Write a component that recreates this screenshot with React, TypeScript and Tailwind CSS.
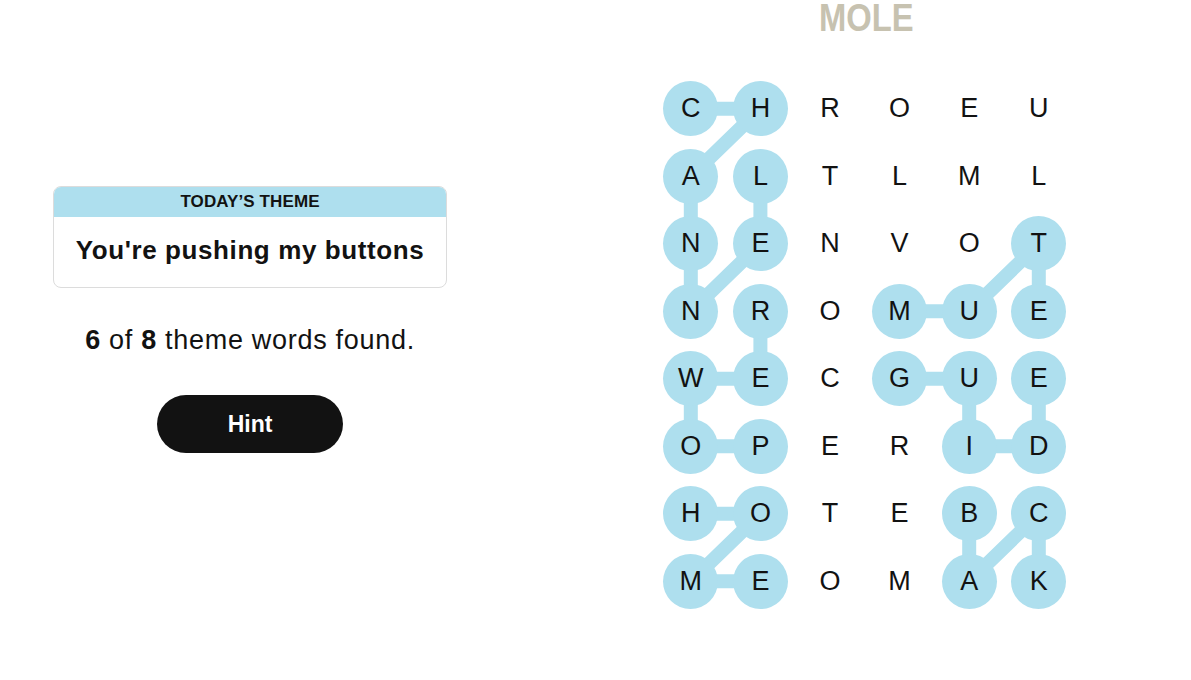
import React from "react";

const ROWS = ["CHROEU", "ALTLML", "NENVOT", "NROMUE", "WECGUE", "OPERID", "HOTEBC", "MEOMAK"];

const WORDS: [number, number][][] = [
  [[0, 0], [0, 1], [1, 0], [2, 0], [3, 0], [2, 1], [1, 1]],
  [[5, 1], [5, 0], [4, 0], [4, 1], [3, 1]],
  [[6, 0], [6, 1], [7, 0], [7, 1]],
  [[3, 3], [3, 4], [2, 5], [3, 5]],
  [[4, 3], [4, 4], [5, 4], [5, 5], [4, 5]],
  [[6, 4], [7, 4], [6, 5], [7, 5]],
];

const CW = 69.6;
const CH = 67.5;

const lit = new Set<string>();
WORDS.forEach((w) => w.forEach(([r, c]) => lit.add(`${r}-${c}`)));

const cx = (c: number) => c * CW + CW / 2;
const cy = (r: number) => r * CH + CH / 2;

export default function App() {
  return (
    <div
      className="flex w-[1191px] h-[680px] bg-white text-[#121212] overflow-hidden"
      style={{ fontFamily: '"Liberation Sans", Arial, sans-serif' }}
    >
      <div className="ml-[53px] w-[394px] pt-[186px] flex flex-col items-center">
        <div className="w-full rounded-[8px] border border-[#dcdcdc] overflow-hidden">
          <div className="h-[30px] bg-[#aedfee] flex items-center justify-center text-[17px] font-bold tracking-[0.1px] uppercase">
            TODAY’S THEME
          </div>
          <div className="h-[70px] pb-[4px] flex items-center justify-center text-[26px] font-bold tracking-[0.6px]">
            You're pushing my buttons
          </div>
        </div>
        <div className="mt-[36px] text-[27px] tracking-[0.7px] leading-[32px]">
          <span className="font-bold">6</span> of <span className="font-bold">8</span> theme words found.
        </div>
        <button className="mt-[39px] w-[186px] h-[58px] rounded-full bg-[#121212] text-white text-[23px] font-bold flex items-center justify-center">
          Hint
        </button>
      </div>

      <div className="ml-[209px] flex flex-col items-center w-[417.6px]">
        <div className="h-[36px] leading-[36px] text-[39px] font-bold text-[#c7c2b0] scale-x-[0.84] translate-x-[2px]">
          MOLE
        </div>
        <div className="relative mt-[38.75px] grid grid-cols-[repeat(6,69.6px)] grid-rows-[repeat(8,67.5px)]">
          <svg
            className="absolute inset-0 z-0"
            width={CW * 6}
            height={CH * 8}
            viewBox={`0 0 ${CW * 6} ${CH * 8}`}
          >
            {WORDS.map((w, i) => (
              <polyline
                key={i}
                points={w.map(([r, c]) => `${cx(c)},${cy(r)}`).join(" ")}
                fill="none"
                stroke="#aedfee"
                strokeWidth={14}
                strokeLinejoin="round"
              />
            ))}
          </svg>
          {ROWS.map((row, r) =>
            row.split("").map((ch, c) => (
              <div key={`${r}-${c}`} className="relative z-10 flex items-center justify-center">
                {lit.has(`${r}-${c}`) ? (
                  <div className="w-[55px] h-[55px] rounded-full bg-[#aedfee] flex items-center justify-center text-[27px]">
                    {ch}
                  </div>
                ) : (
                  <div className="text-[27px]">{ch}</div>
                )}
              </div>
            ))
          )}
        </div>
      </div>
    </div>
  );
}
